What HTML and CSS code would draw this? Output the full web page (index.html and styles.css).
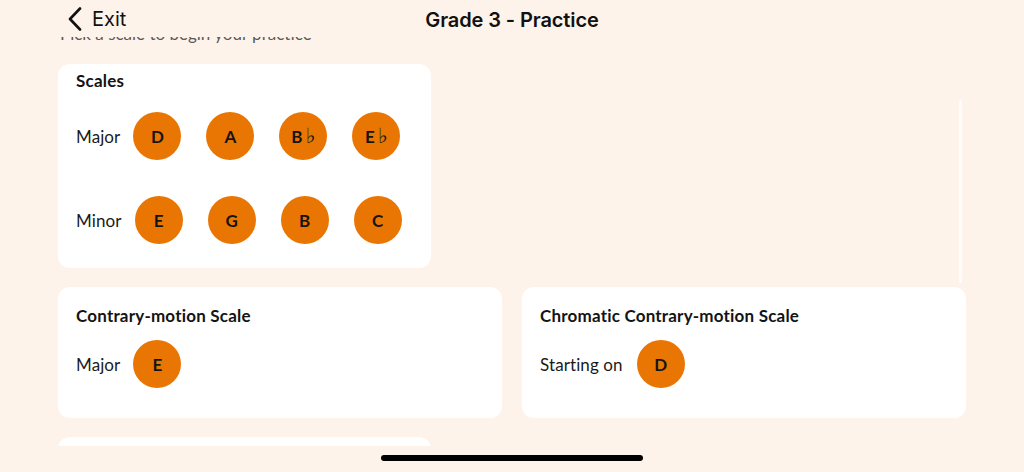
FILE: index.html
```html
<!DOCTYPE html>
<html>
<head>
<meta charset="utf-8">
<link rel="stylesheet" href="styles.css">
</head>
<body>
<div class="screen">
  <header class="nav">
    <div class="back">
      <svg class="chev" width="16" height="24" viewBox="0 0 16 24"><path d="M13 1.5 L3 12 L13 22.5" fill="none" stroke="#111" stroke-width="2.6" stroke-linecap="round" stroke-linejoin="round"/></svg>
      <span>Exit</span>
    </div>
    <h1 class="title">Grade 3 - Practice</h1>
  </header>
  <main class="scroll">
    <div class="content">
      <p class="hint">Pick a scale to begin your practice</p>
      <section class="card card-scales">
        <h2>Scales</h2>
        <div class="row">
          <span class="label">Major</span>
          <div class="keys">
            <button class="key">D</button>
            <button class="key">A</button>
            <button class="key">B<span class="flat">♭</span></button>
            <button class="key">E<span class="flat">♭</span></button>
          </div>
        </div>
        <div class="row row-minor">
          <span class="label">Minor</span>
          <div class="keys">
            <button class="key">E</button>
            <button class="key">G</button>
            <button class="key">B</button>
            <button class="key">C</button>
          </div>
        </div>
      </section>
      <div class="pair">
        <section class="card card-small">
          <h2>Contrary-motion Scale</h2>
          <div class="row">
            <span class="label">Major</span>
            <div class="keys"><button class="key">E</button></div>
          </div>
        </section>
        <section class="card card-small">
          <h2>Chromatic Contrary-motion Scale</h2>
          <div class="row">
            <span class="label">Starting on</span>
            <div class="keys"><button class="key">D</button></div>
          </div>
        </section>
      </div>
      <section class="card card-next"></section>
    </div>
    <div class="scrollbar"></div>
  </main>
  <div class="home"></div>
</div>
</body>
</html>
```
FILE: styles.css
```css
html, body {
  margin: 0;
  padding: 0;
}
body {
  background: #fef3ea;
  width: 1024px;
  height: 472px;
  overflow: hidden;
  font-family: "Lato", "Noto Sans", sans-serif;
  color: #141414;
}
.screen {
  display: flex;
  flex-direction: column;
  height: 472px;
}
.nav {
  height: 37px;
  position: relative;
  display: flex;
  align-items: center;
  justify-content: center;
  flex: none;
}
.back {
  position: absolute;
  left: 67px;
  top: 7px;
  display: flex;
  align-items: center;
  gap: 9px;
  font-family: "Inter", sans-serif;
  font-size: 20px;
  color: #111;
}
.back span {
  line-height: 24px;
}
.title {
  margin: 0;
  margin-top: 2px;
  font-family: "Inter", sans-serif;
  font-weight: 600;
  font-size: 20px;
  color: #111;
  letter-spacing: -0.1px;
}
.scroll {
  position: relative;
  height: 409px;
  overflow: hidden;
  flex: none;
}
.content {
  padding-top: 1px;
  margin-top: -15px;
  padding-left: 58px;
}
.hint {
  margin: 0 0 19px 2px;
  font-size: 17px;
  line-height: 22px;
  color: #5a5a5a;
  height: 22px;
}
.card {
  background: #fff;
  border-radius: 12px;
  box-sizing: border-box;
}
.card h2 {
  margin: 0;
  font-size: 17px;
  font-weight: 700;
  line-height: 20px;
  letter-spacing: 0.2px;
  color: #141414;
}
.card-scales {
  width: 373px;
  padding: 7px 18px 24px;
}
.card-scales .row {
  margin-top: 21px;
}
.card-scales .row-minor {
  margin-top: 36px;
}
.row {
  display: flex;
  align-items: center;
  gap: 13px;
}
.label {
  font-size: 17px;
  letter-spacing: 0.1px;
  color: #1a1a1a;
}
.keys {
  display: flex;
  gap: 25px;
}
.key {
  width: 48px;
  height: 48px;
  border-radius: 50%;
  border: none;
  padding: 0;
  background: #e97602;
  font-family: "Lato", sans-serif;
  font-weight: 700;
  font-size: 17px;
  color: #141414;
  display: flex;
  align-items: center;
  justify-content: center;
}
.flat {
  font-family: "DejaVu Sans", sans-serif;
  font-weight: 400;
  font-size: 21px;
  line-height: 20px;
  margin-left: 3px;
}
.pair {
  display: grid;
  grid-template-columns: 444px 444px;
  gap: 20px;
  margin-top: 19px;
}
.card-small {
  padding: 19px 18px 30px;
}
.card-small .row {
  margin-top: 14px;
}
.card-small:last-child .row {
  gap: 14px;
}
.card-next {
  width: 373px;
  height: 40px;
  margin-top: 19px;
}
.scrollbar {
  position: absolute;
  left: 959px;
  top: 63px;
  width: 3px;
  height: 183px;
  border-radius: 2px;
  background: rgba(255, 255, 255, 0.75);
}
.home {
  width: 262px;
  height: 6px;
  border-radius: 3px;
  background: #000;
  margin: 9px auto 0;
}
```
